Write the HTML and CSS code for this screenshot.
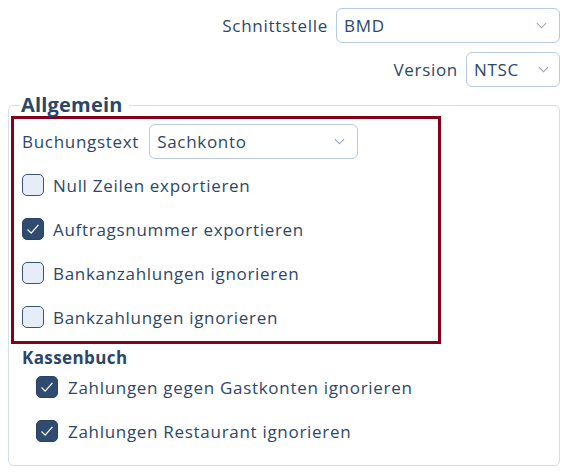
FILE: index.html
```html
<!DOCTYPE html>
<html lang="de">
<head>
<meta charset="utf-8">
<link rel="stylesheet" href="styles.css">
</head>
<body>
<div class="page">
  <div class="top">
    <div class="row">
      <span class="lbl">Schnittstelle</span>
      <div class="select w-schnitt"><span>BMD</span><svg class="chev" viewBox="0 0 12 7"><path d="M1 1l5 5 5-5"/></svg></div>
    </div>
    <div class="row">
      <span class="lbl">Version</span>
      <div class="select w-version"><span>NTSC</span><svg class="chev" viewBox="0 0 12 7"><path d="M1 1l5 5 5-5"/></svg></div>
    </div>
  </div>
  <fieldset class="group">
    <legend>Allgemein</legend>
    <div class="highlight">
      <div class="field">
        <span class="lbl">Buchungstext</span>
        <div class="select w-buch"><span>Sachkonto</span><svg class="chev" viewBox="0 0 12 7"><path d="M1 1l5 5 5-5"/></svg></div>
      </div>
      <label class="check"><span class="box"></span>Null Zeilen exportieren</label>
      <label class="check"><span class="box on"><svg viewBox="0 0 22 22"><path d="M5 11.5l4 4 8-9"/></svg></span>Auftragsnummer exportieren</label>
      <label class="check"><span class="box"></span>Bankanzahlungen ignorieren</label>
      <label class="check"><span class="box"></span>Bankzahlungen ignorieren</label>
    </div>
    <div class="kasse">
      <div class="subhead">Kassenbuch</div>
      <div class="sublist">
        <label class="check"><span class="box on"><svg viewBox="0 0 22 22"><path d="M5 11.5l4 4 8-9"/></svg></span>Zahlungen gegen Gastkonten ignorieren</label>
        <label class="check"><span class="box on"><svg viewBox="0 0 22 22"><path d="M5 11.5l4 4 8-9"/></svg></span>Zahlungen Restaurant ignorieren</label>
      </div>
    </div>
  </fieldset>
</div>
</body>
</html>
```
FILE: styles.css
```css
html, body {
  margin: 0;
  padding: 0;
  background: #ffffff;
}
body {
  font-family: "Open Sans", "Liberation Sans", sans-serif;
  font-size: 17px;
  letter-spacing: 0.7px;
  color: #2d4769;
}
.page {
  padding: 8px 8px 0 8px;
}
.top {
  display: flex;
  flex-direction: column;
  gap: 9px;
}
.row {
  display: flex;
  justify-content: flex-end;
  align-items: center;
  gap: 8px;
  padding-right: 1px;
}
.lbl {
  white-space: nowrap;
}
.select {
  box-sizing: border-box;
  height: 35px;
  border: 1px solid #b9cae2;
  border-radius: 6px;
  display: flex;
  align-items: center;
  justify-content: space-between;
  padding: 0 12px 0 7px;
  background: #fff;
}
.chev {
  width: 11px;
  height: 7px;
  fill: none;
  stroke: #95a4b8;
  stroke-width: 1.2;
}
.w-schnitt { width: 224px; }
.w-version { width: 94px; padding-right: 10px; }
.w-buch { width: 209px; }
.group {
  margin: 7px 0 0 0;
  padding: 0 2px 12px 2px;
  border: 1px solid #d6dee8;
  border-radius: 5px;
  width: 552px;
  box-sizing: border-box;
}
.group legend {
  font-size: 20px;
  font-weight: 700;
  line-height: 22px;
  letter-spacing: 0.2px;
  padding: 0 6px 0 1px;
  margin-left: 9px;
  color: #2c4668;
}
.highlight {
  width: 430px;
  box-sizing: border-box;
  border: 3px solid #850019;
  padding: 5px 8px 2px 8px;
}
.field {
  display: flex;
  align-items: center;
  gap: 10px;
  margin-bottom: 4px;
}
.check {
  display: flex;
  align-items: center;
  gap: 9px;
  height: 44px;
  white-space: nowrap;
}
.box {
  box-sizing: border-box;
  width: 22px;
  height: 22px;
  border: 1.5px solid #3b5476;
  border-radius: 5px;
  background: #e6edf7;
  display: flex;
  align-items: center;
  justify-content: center;
  flex: none;
}
.box.on {
  background: #2f4b70;
  border-color: #2a4163;
}
.box svg {
  width: 22px;
  height: 22px;
  fill: none;
  stroke: #ffffff;
  stroke-width: 1.4;
}
.kasse {
  padding: 2px 0 0 11px;
}
.subhead {
  font-size: 17px;
  font-weight: 700;
  line-height: 24px;
  letter-spacing: 0.4px;
  color: #2c4668;
}
.sublist {
  padding-left: 14px;
  margin-top: -5px;
}
.sublist .check {
  gap: 10px;
}
```
